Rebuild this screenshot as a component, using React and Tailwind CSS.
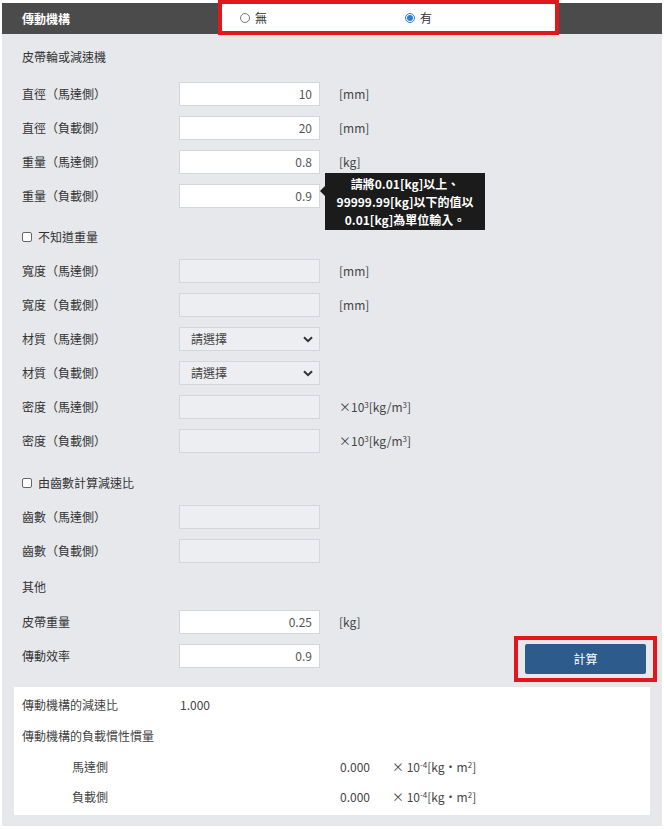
import { useState } from 'react'

const font = { fontFamily: '"Noto Sans CJK TC", "Noto Sans", sans-serif' }

function Chevron() {
  return (
    <svg width="10" height="7" viewBox="0 0 10 7" className="text-[#333]">
      <path d="M1 1.2 L5 5.2 L9 1.2" fill="none" stroke="currentColor" strokeWidth="2" />
    </svg>
  )
}

function Row({ label, value, unit, disabled, select, children }) {
  return (
    <div className="h-[34px] flex items-center">
      <div className="w-[177px] pl-[20px] text-[12px] text-[#333]">{label}</div>
      <div className="relative">
        {select ? (
          <div className="w-[141px] h-[24px] border border-[#d3d6da] bg-[#eceef1] flex items-center justify-between pl-[11px] pr-[6px] text-[12px] text-[#444]">
            <span>請選擇</span>
            <Chevron />
          </div>
        ) : (
          <div className={`w-[141px] h-[24px] border border-[#d3d6da] flex items-center justify-end pr-[7px] text-[12px] text-[#555] ${disabled ? 'bg-[#eceef1]' : 'bg-white'}`}>
            {value}
          </div>
        )}
        {children}
      </div>
      {unit && <div className="pl-[19px] text-[12px] text-[#444]">{unit}</div>}
    </div>
  )
}

function Check({ label }) {
  return (
    <div className="h-[34px] flex items-center pl-[20px] text-[12px] text-[#333]">
      <span className="w-[10px] h-[10px] border border-[#666] bg-white rounded-[2px] mr-[6px]" />
      {label}
    </div>
  )
}

function Heading({ children, className }) {
  return <div className={`h-[34px] flex items-center pl-[20px] text-[12px] text-[#333] ${className || ''}`}>{children}</div>
}

export default function App() {
  const [mode, setMode] = useState('yes')
  const density = <>×10<sup className="text-[8px]">3</sup>[kg/m<sup className="text-[8px]">3</sup>]</>
  const inertia = <>× 10<sup className="text-[8px]">-4</sup>[kg・m<sup className="text-[8px]">2</sup>]</>

  return (
    <div className="w-[664px] h-[830px] bg-white pt-[3px] px-[2px]" style={font}>
      <div className="bg-[#e6e8ec] h-[823px]">
        <div className="relative h-[31px] bg-[#4b4b4b] flex items-center pl-[20px]">
          <span className="text-white text-[12px] font-bold">傳動機構</span>
          <div className="absolute left-[216px] top-[-3px] w-[341px] h-[35px] border-4 border-[#e3161c] bg-white flex items-center text-[12px] text-[#333]">
            <label className="flex items-center gap-[5px] pl-[18px] w-[183px]" onClick={() => setMode('no')}>
              <span className="w-[10px] h-[10px] rounded-full border border-[#777] bg-white flex items-center justify-center">
                {mode === 'no' && <span className="w-[6px] h-[6px] rounded-full bg-[#2a7fd8]" />}
              </span>
              無
            </label>
            <label className="flex items-center gap-[5px]" onClick={() => setMode('yes')}>
              <span className={`w-[10px] h-[10px] rounded-full border flex items-center justify-center bg-white ${mode === 'yes' ? 'border-[#2a7fd8]' : 'border-[#777]'}`}>
                {mode === 'yes' && <span className="w-[6px] h-[6px] rounded-full bg-[#2a7fd8]" />}
              </span>
              有
            </label>
          </div>
        </div>

        <Heading className="mt-[6px] mb-[3px]">皮帶輪或減速機</Heading>
        <Row label="直徑（馬達側）" value="10" unit="[mm]" />
        <Row label="直徑（負載側）" value="20" unit="[mm]" />
        <Row label="重量（馬達側）" value="0.8" unit="[kg]" />
        <Row label="重量（負載側）" value="0.9">
          <div className="absolute left-[146px] top-[-11px] w-[160px] h-[57px] bg-[#1b1b1b] text-white text-[12px] font-bold leading-[18px] flex flex-col items-center justify-center z-10">
            <span>請將0.01[kg]以上、</span>
            <span>99999.99[kg]以下的值以</span>
            <span>0.01[kg]為單位輸入。</span>
            <span className="absolute left-[-5px] top-[13px] w-0 h-0 border-y-[5px] border-y-transparent border-r-[5px] border-r-[#1b1b1b]" />
          </div>
        </Row>

        <div className="mt-[7px]"><Check label="不知道重量" /></div>
        <Row label="寬度（馬達側）" disabled unit="[mm]" />
        <Row label="寬度（負載側）" disabled unit="[mm]" />
        <Row label="材質（馬達側）" select />
        <Row label="材質（負載側）" select />
        <Row label="密度（馬達側）" disabled unit={density} />
        <Row label="密度（負載側）" disabled unit={density} />

        <div className="mt-[8px]"><Check label="由齒數計算減速比" /></div>
        <Row label="齒數（馬達側）" disabled />
        <Row label="齒數（負載側）" disabled />

        <Heading className="mt-[2px] mb-[1px]">其他</Heading>
        <Row label="皮帶重量" value="0.25" unit="[kg]" />
        <div className="flex items-start">
          <div className="flex-1"><Row label="傳動效率" value="0.9" /></div>
          <div className="mr-[5px] mt-[-3px] w-[143px] h-[46px] border-4 border-[#e3161c] flex items-center justify-center">
            <button className="w-[121px] h-[30px] bg-[#2d5b8c] rounded-[2px] text-white text-[12px]">計算</button>
          </div>
        </div>

        <div className="mx-[12px] mt-[5px] h-[128px] bg-white pl-[8px] pt-[3px] text-[12px] text-[#444]">
          <div className="h-[29px] flex items-center">
            <span className="w-[158px]">傳動機構的減速比</span>
            <span>1.000</span>
          </div>
          <div className="h-[33px] flex items-center">傳動機構的負載慣性慣量</div>
          <div className="h-[30px] flex items-center">
            <span className="pl-[50px] w-[318px]">馬達側</span>
            <span className="w-[52px]">0.000</span>
            <span>{inertia}</span>
          </div>
          <div className="h-[29px] flex items-center">
            <span className="pl-[50px] w-[318px]">負載側</span>
            <span className="w-[52px]">0.000</span>
            <span>{inertia}</span>
          </div>
        </div>
      </div>
    </div>
  )
}
